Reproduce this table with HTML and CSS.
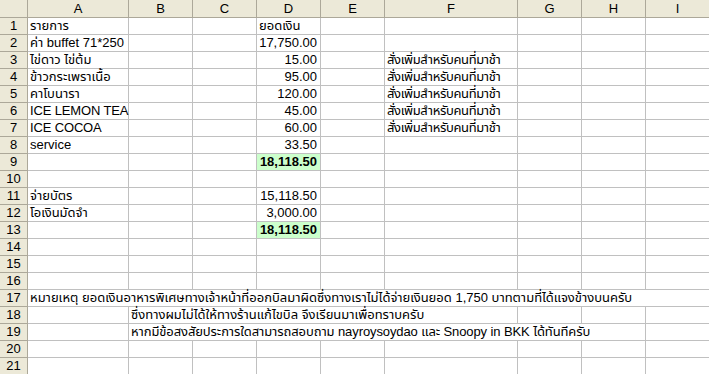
FILE: index.html
```html
<!DOCTYPE html>
<html lang="th">
<head>
<meta charset="utf-8">
<title>Sheet</title>
<link rel="stylesheet" href="styles.css">
</head>
<body>
<div class="sheet">
  <div class="row head">
    <div class="cell rh corner"></div>
    <div class="cell ch">A</div><div class="cell ch">B</div><div class="cell ch">C</div><div class="cell ch">D</div><div class="cell ch">E</div><div class="cell ch">F</div><div class="cell ch">G</div><div class="cell ch">H</div><div class="cell ch">I</div>
  </div>
  <div class="row">
    <div class="cell rh">1</div>
    <div class="cell">รายการ</div><div class="cell"></div><div class="cell"></div><div class="cell">ยอดเงิน</div><div class="cell"></div><div class="cell"></div><div class="cell"></div><div class="cell"></div><div class="cell"></div>
  </div>
  <div class="row">
    <div class="cell rh">2</div>
    <div class="cell">ค่า buffet 71*250</div><div class="cell"></div><div class="cell"></div><div class="cell num">17,750.00</div><div class="cell"></div><div class="cell"></div><div class="cell"></div><div class="cell"></div><div class="cell"></div>
  </div>
  <div class="row">
    <div class="cell rh">3</div>
    <div class="cell">ไข่ดาว ไข่ต้ม</div><div class="cell"></div><div class="cell"></div><div class="cell num">15.00</div><div class="cell"></div><div class="cell th">สั่งเพิ่มสำหรับคนที่มาช้า</div><div class="cell"></div><div class="cell"></div><div class="cell"></div>
  </div>
  <div class="row">
    <div class="cell rh">4</div>
    <div class="cell">ข้าวกระเพราเนื้อ</div><div class="cell"></div><div class="cell"></div><div class="cell num">95.00</div><div class="cell"></div><div class="cell th">สั่งเพิ่มสำหรับคนที่มาช้า</div><div class="cell"></div><div class="cell"></div><div class="cell"></div>
  </div>
  <div class="row">
    <div class="cell rh">5</div>
    <div class="cell">คาโบนารา</div><div class="cell"></div><div class="cell"></div><div class="cell num">120.00</div><div class="cell"></div><div class="cell th">สั่งเพิ่มสำหรับคนที่มาช้า</div><div class="cell"></div><div class="cell"></div><div class="cell"></div>
  </div>
  <div class="row">
    <div class="cell rh">6</div>
    <div class="cell tight">ICE LEMON TEA</div><div class="cell"></div><div class="cell"></div><div class="cell num">45.00</div><div class="cell"></div><div class="cell th">สั่งเพิ่มสำหรับคนที่มาช้า</div><div class="cell"></div><div class="cell"></div><div class="cell"></div>
  </div>
  <div class="row">
    <div class="cell rh">7</div>
    <div class="cell tight">ICE COCOA</div><div class="cell"></div><div class="cell"></div><div class="cell num">60.00</div><div class="cell"></div><div class="cell th">สั่งเพิ่มสำหรับคนที่มาช้า</div><div class="cell"></div><div class="cell"></div><div class="cell"></div>
  </div>
  <div class="row">
    <div class="cell rh">8</div>
    <div class="cell">service</div><div class="cell"></div><div class="cell"></div><div class="cell num">33.50</div><div class="cell"></div><div class="cell"></div><div class="cell"></div><div class="cell"></div><div class="cell"></div>
  </div>
  <div class="row">
    <div class="cell rh">9</div>
    <div class="cell"></div><div class="cell"></div><div class="cell"></div><div class="cell num total">18,118.50</div><div class="cell"></div><div class="cell"></div><div class="cell"></div><div class="cell"></div><div class="cell"></div>
  </div>
  <div class="row">
    <div class="cell rh">10</div>
    <div class="cell"></div><div class="cell"></div><div class="cell"></div><div class="cell"></div><div class="cell"></div><div class="cell"></div><div class="cell"></div><div class="cell"></div><div class="cell"></div>
  </div>
  <div class="row">
    <div class="cell rh">11</div>
    <div class="cell">จ่ายบัตร</div><div class="cell"></div><div class="cell"></div><div class="cell num">15,118.50</div><div class="cell"></div><div class="cell"></div><div class="cell"></div><div class="cell"></div><div class="cell"></div>
  </div>
  <div class="row">
    <div class="cell rh">12</div>
    <div class="cell">โอเงินมัดจำ</div><div class="cell"></div><div class="cell"></div><div class="cell num">3,000.00</div><div class="cell"></div><div class="cell"></div><div class="cell"></div><div class="cell"></div><div class="cell"></div>
  </div>
  <div class="row">
    <div class="cell rh">13</div>
    <div class="cell"></div><div class="cell"></div><div class="cell"></div><div class="cell num total">18,118.50</div><div class="cell"></div><div class="cell"></div><div class="cell"></div><div class="cell"></div><div class="cell"></div>
  </div>
  <div class="row">
    <div class="cell rh">14</div>
    <div class="cell"></div><div class="cell"></div><div class="cell"></div><div class="cell"></div><div class="cell"></div><div class="cell"></div><div class="cell"></div><div class="cell"></div><div class="cell"></div>
  </div>
  <div class="row">
    <div class="cell rh">15</div>
    <div class="cell"></div><div class="cell"></div><div class="cell"></div><div class="cell"></div><div class="cell"></div><div class="cell"></div><div class="cell"></div><div class="cell"></div><div class="cell"></div>
  </div>
  <div class="row">
    <div class="cell rh">16</div>
    <div class="cell"></div><div class="cell"></div><div class="cell"></div><div class="cell"></div><div class="cell"></div><div class="cell"></div><div class="cell"></div><div class="cell"></div><div class="cell"></div>
  </div>
  <div class="row">
    <div class="cell rh">17</div>
    <div class="cell span-a-i">หมายเหตุ ยอดเงินอาหารพิเศษทางเจ้าหน้าที่ออกบิลมาผิดซึ่งทางเราไม่ได้จ่ายเงินยอด 1,750 บาทตามที่ได้แจงข้างบนครับ</div>
  </div>
  <div class="row">
    <div class="cell rh">18</div>
    <div class="cell"></div><div class="cell span-b-f">ซึ่งทางผมไม่ได้ให้ทางร้านแก้ไขบิล จึงเรียนมาเพื่อทราบครับ</div><div class="cell"></div><div class="cell"></div><div class="cell"></div>
  </div>
  <div class="row">
    <div class="cell rh">19</div>
    <div class="cell"></div><div class="cell span-b-h th-mild">หากมีข้อสงสัยประการใดสามารถสอบถาม nayroysoydao และ Snoopy in BKK ได้ทันทีครับ</div><div class="cell"></div>
  </div>
  <div class="row">
    <div class="cell rh">20</div>
    <div class="cell"></div><div class="cell"></div><div class="cell"></div><div class="cell"></div><div class="cell"></div><div class="cell"></div><div class="cell"></div><div class="cell"></div><div class="cell"></div>
  </div>
  <div class="row">
    <div class="cell rh">21</div>
    <div class="cell"></div><div class="cell"></div><div class="cell"></div><div class="cell"></div><div class="cell"></div><div class="cell"></div><div class="cell"></div><div class="cell"></div><div class="cell"></div>
  </div>
</div>
</body>
</html>
```

FILE: styles.css
```css
html, body {
  margin: 0;
  padding: 0;
  background: #ffffff;
  overflow: hidden;
}

.sheet {
  width: 710px;
  font-family: "Liberation Sans", "Noto Sans Thai", "Noto Sans", sans-serif;
  font-size: 13px;
  color: #000000;
}

.row {
  display: grid;
  grid-template-columns: 28px 101px 64px 64px 64px 64px 133px 64px 64px 64px;
  height: 17px;
}

.row.head {
  height: 18px;
}

.cell {
  box-sizing: border-box;
  border-right: 1px solid #c0c0c0;
  border-bottom: 1px solid #c0c0c0;
  padding: 0 2px;
  line-height: 16px;
  white-space: nowrap;
  overflow: visible;
}

.rh,
.ch {
  background: #ece9d8;
  border-right-color: #aca899;
  border-bottom-color: #aca899;
  text-align: center;
  padding: 0;
}

.ch {
  line-height: 17px;
}

.num {
  text-align: right;
  padding-right: 3px;
}

.total {
  background: #ccffcc;
  font-weight: bold;
}

.th {
  letter-spacing: -0.35px;
}

.th-mild {
  letter-spacing: -0.1px;
}

.tight {
  letter-spacing: -0.15px;
}

.span-a-i {
  grid-column: span 9;
}

.span-b-f {
  grid-column: span 5;
}

.span-b-h {
  grid-column: span 7;
}
```
